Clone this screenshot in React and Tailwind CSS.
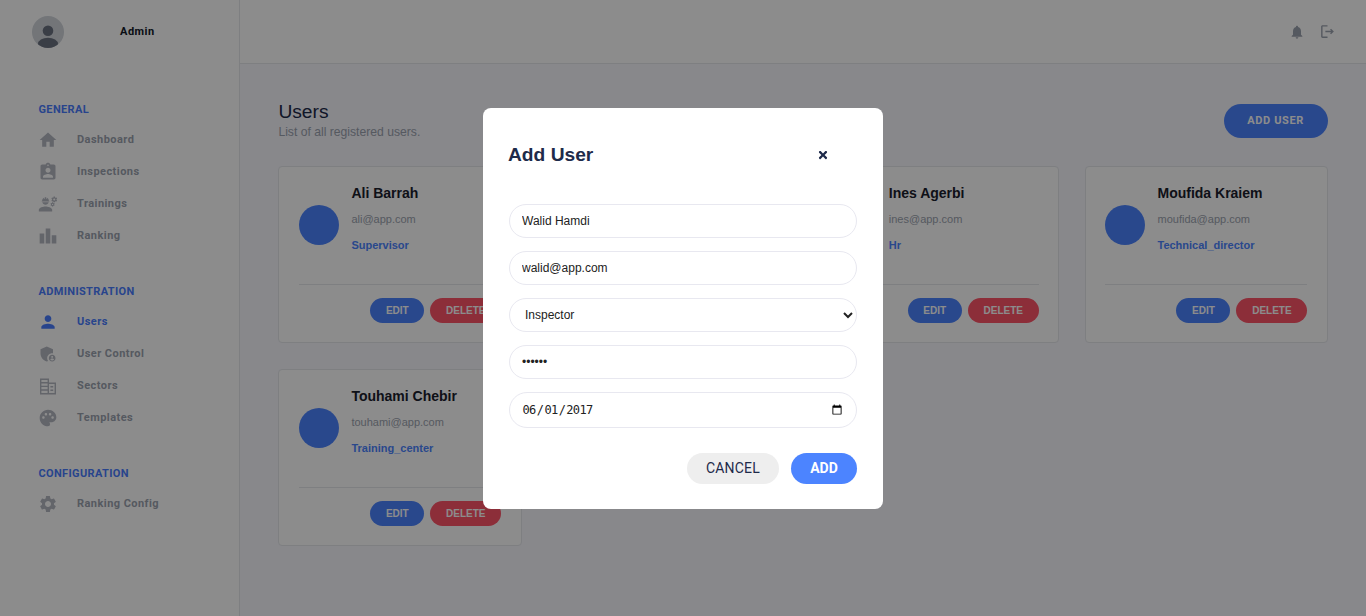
import React from 'react';
import {
  MdHome, MdAssignmentInd, MdEngineering, MdLeaderboard, MdPerson, MdAdminPanelSettings,
  MdPalette, MdSettings, MdNotifications, MdOutlineLogout,
} from 'react-icons/md';
import { FaTimes } from 'react-icons/fa';

// two blocks with window rows, no package has this exact one
const SectorsIcon = ({ size, className }) => (
  <svg width={size} height={size} viewBox="0 0 20 20" className={className} fill="none" stroke="currentColor" strokeWidth="1.4">
    <path d="M2.7 3.2h7.6v14.6H2.7zM10.3 7.2h7v10.6h-7z" />
    <path d="M2.7 6.8h7.6M2.7 10.4h7.6M2.7 14h7.6M12.4 10.8h2.8M12.4 14.2h2.8" />
  </svg>
);

const sections = [
  {
    title: 'GENERAL',
    items: [
      { label: 'Dashboard', icon: MdHome },
      { label: 'Inspections', icon: MdAssignmentInd },
      { label: 'Trainings', icon: MdEngineering },
      { label: 'Ranking', icon: MdLeaderboard },
    ],
  },
  {
    title: 'ADMINISTRATION',
    items: [
      { label: 'Users', icon: MdPerson, active: true },
      { label: 'User Control', icon: MdAdminPanelSettings },
      { label: 'Sectors', icon: SectorsIcon },
      { label: 'Templates', icon: MdPalette },
    ],
  },
  {
    title: 'CONFIGURATION',
    items: [{ label: 'Ranking Config', icon: MdSettings }],
  },
];

const users = [
  { name: 'Ali Barrah', email: 'ali@app.com', role: 'Supervisor' },
  { name: 'Sami Trabelsi', email: 'sami@app.com', role: 'Inspector' },
  { name: 'Ines Agerbi', email: 'ines@app.com', role: 'Hr' },
  { name: 'Moufida Kraiem', email: 'moufida@app.com', role: 'Technical_director' },
  { name: 'Touhami Chebir', email: 'touhami@app.com', role: 'Training_center' },
];

const Sidebar = () => (
  <aside className="w-[240px] shrink-0 bg-white border-r border-[#e5e7eb] pl-[32px] pr-4 pt-4 font-['Roboto',sans-serif]">
    <div className="flex items-center h-[32px]">
      <div className="w-8 h-8 rounded-full bg-[#d1d5db] overflow-hidden">
        <svg viewBox="0 0 32 32" className="w-8 h-8">
          <circle cx="16" cy="14.7" r="5.3" fill="#6b7280" />
          <ellipse cx="16" cy="28" rx="10" ry="6.3" fill="#6b7280" />
        </svg>
      </div>
      <span className="ml-[56px] text-[11px] font-bold tracking-[0.5px] text-[#111827]">Admin</span>
    </div>
    <nav className="mt-[54px] pl-[6.5px]">
      {sections.map((s) => (
        <div key={s.title} className="mb-[32px]">
          <h4 className="text-[11px] leading-[16px] font-bold tracking-[0.35px] text-[#4a7dff] mb-[6px]">{s.title}</h4>
          {s.items.map((item) => {
            const Icon = item.icon;
            return (
              <div
                key={item.label}
                className={`flex items-center h-[32px] text-[11px] font-bold tracking-[0.45px] ${item.active ? 'text-[#4a7dff]' : 'text-[#9ca3af]'}`}
              >
                <Icon size={20} className={`-ml-[0.5px] shrink-0 ${item.active ? '' : 'text-[#b5b8c2]'}`} />
                <span className="ml-[19px]">{item.label}</span>
              </div>
            );
          })}
        </div>
      ))}
    </nav>
  </aside>
);

const UserCard = ({ user }) => (
  <div className="bg-white border border-[#e5e7eb] rounded-[4px] px-[19.2px] pt-[16px] pb-[19px] h-[177px] flex flex-col font-['Liberation_Sans',sans-serif]">
    <div className="flex items-center h-[92px] mb-[9px]">
      <div className="w-10 h-10 rounded-full bg-[#4c84ff] shrink-0 -mt-[8px]" />
      <div className="ml-[12.8px] -mt-[22px]">
        <div className="text-[14px] leading-[20px] font-bold text-[#1a202c]">{user.name}</div>
        <div className="text-[11px] leading-[16px] mt-[8px] text-[#9ca3af]">{user.email}</div>
        <div className="text-[11px] leading-[16px] mt-[10px] font-bold text-[#4c84ff]">{user.role}</div>
      </div>
    </div>
    <div className="border-t border-[#e5e7eb] flex justify-end gap-[6px] pt-[13px]">
      <button className="h-[25px] w-[54px] rounded-full bg-[#4c84ff] text-white text-[10px] font-bold">EDIT</button>
      <button className="h-[25px] w-[71px] rounded-full bg-[#ff5469] text-white text-[10px] font-bold">DELETE</button>
    </div>
  </div>
);

const fieldClass = "w-full h-[34px] rounded-full border border-[#e8e8f0] bg-white px-[12px] text-[12px] text-[#222] outline-none font-['Liberation_Sans',sans-serif]";

const AddUserModal = () => (
  <div className="fixed inset-0 bg-black/45 flex items-center justify-center">
    <div className="w-[400px] h-[401px] bg-white rounded-[8px] px-[26px] pt-[36px] font-['Liberation_Sans',sans-serif]">
      <div className="flex items-center justify-between h-[22px] -ml-[1px] pr-[28px]">
        <h2 className="text-[19.2px] leading-[24px] pt-[1px] font-bold text-[#1e2a4a]">Add User</h2>
        <FaTimes size={12} className="text-[#1e2a4a]" />
      </div>
      <div className="mt-[38px] flex flex-col gap-[13px]">
        <input className={fieldClass} defaultValue="Walid Hamdi" />
        <input className={fieldClass} defaultValue="walid@app.com" />
        <select className="w-full h-[34px] rounded-full border border-[#e8e8f0] bg-white pl-[11px] pr-[12px] text-[12px] text-[#222] outline-none font-['Liberation_Sans',sans-serif]" defaultValue="Inspector">
          <option>Inspector</option>
          <option>Supervisor</option>
        </select>
        <input className={fieldClass} type="password" defaultValue="secret" />
        <input className="w-full h-[36px] rounded-full border border-[#e8e8f0] bg-white pl-[11.5px] pr-[11px] pt-[1px] text-[12px] tracking-[-0.6px] text-[#222] outline-none font-['DejaVu_Sans_Mono',monospace]" type="date" defaultValue="2017-06-01" />
      </div>
      <div className="mt-[25px] flex justify-end gap-[12px] text-[14px] font-['Roboto',sans-serif]">
        <button className="h-[31px] w-[92px] rounded-full bg-[#eeeeee] text-[#1e2a4a] tracking-[0.2px]">CANCEL</button>
        <button className="h-[31px] w-[66px] rounded-full bg-[#4c84ff] text-white font-bold">ADD</button>
      </div>
    </div>
  </div>
);

export default function App() {
  return (
    <div className="h-screen flex overflow-hidden bg-[#f7f7fe]">
      <Sidebar />
      <div className="flex-1 min-w-0 flex flex-col">
        <header className="h-[64px] shrink-0 bg-white border-b border-[#e5e7eb] flex items-center justify-end gap-[14px] pr-[30px] text-[#9ca3af]">
          <MdNotifications size={16} />
          <MdOutlineLogout size={17} />
        </header>
        <main className="px-[38.4px] pt-[35px]">
          <div className="flex items-center justify-between font-['Liberation_Sans',sans-serif] h-[42px] mt-[1px]">
            <div>
              <h1 className="text-[19.2px] leading-[18px] mb-[4px] text-[#1e2a4a]">Users</h1>
              <p className="text-[12.16px] leading-[14px] text-[#9ca3af]">List of all registered users.</p>
            </div>
            <button className="h-[34px] w-[104px] pt-[1px] rounded-full bg-[#4c84ff] text-white text-[11px] font-bold tracking-[0.6px] font-['Roboto',sans-serif]">ADD USER</button>
          </div>
          <div className="grid grid-cols-4 gap-x-[25.6px] gap-y-[26px] mt-[24px]">
            {users.map((u) => <UserCard key={u.name} user={u} />)}
          </div>
        </main>
      </div>
      <AddUserModal />
    </div>
  );
}
